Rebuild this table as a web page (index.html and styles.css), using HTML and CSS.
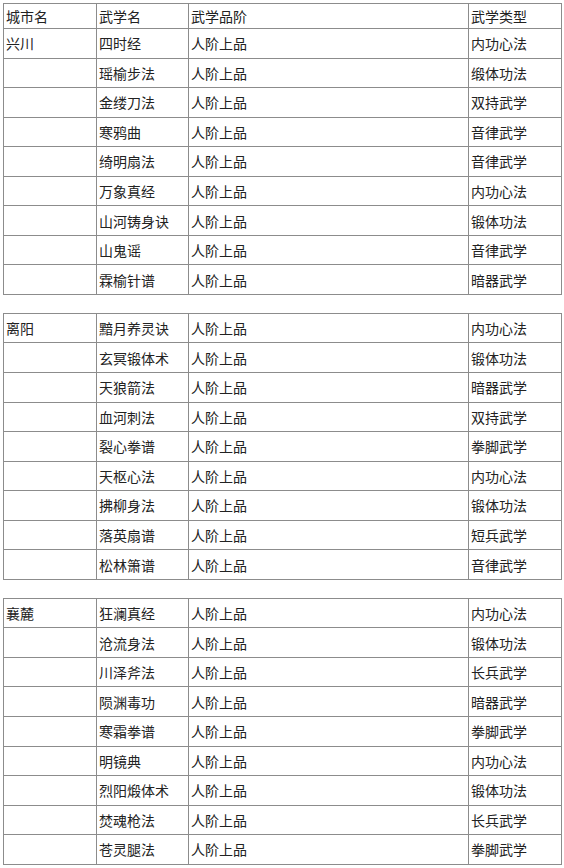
FILE: index.html
```html
<!DOCTYPE html>
<html lang="zh-CN">
<head>
<meta charset="utf-8">
<title>武学列表</title>
<link rel="stylesheet" href="styles.css">
</head>
<body>
<div class="page">
  <table class="wx">
    <colgroup><col class="c1"><col class="c2"><col class="c3"><col class="c4"></colgroup>
    <tr class="head"><td>城市名</td><td>武学名</td><td>武学品阶</td><td>武学类型</td></tr>
    <tr><td>兴川</td><td>四时经</td><td>人阶上品</td><td>内功心法</td></tr>
    <tr><td></td><td>瑶榆步法</td><td>人阶上品</td><td>缎体功法</td></tr>
    <tr><td></td><td>金缕刀法</td><td>人阶上品</td><td>双持武学</td></tr>
    <tr><td></td><td>寒鸦曲</td><td>人阶上品</td><td>音律武学</td></tr>
    <tr><td></td><td>绮明扇法</td><td>人阶上品</td><td>音律武学</td></tr>
    <tr><td></td><td>万象真经</td><td>人阶上品</td><td>内功心法</td></tr>
    <tr><td></td><td>山河铸身诀</td><td>人阶上品</td><td>锻体功法</td></tr>
    <tr><td></td><td>山鬼谣</td><td>人阶上品</td><td>音律武学</td></tr>
    <tr><td></td><td>霖榆针谱</td><td>人阶上品</td><td>暗器武学</td></tr>
  </table>
  <table class="wx">
    <colgroup><col class="c1"><col class="c2"><col class="c3"><col class="c4"></colgroup>
    <tr><td>离阳</td><td>黯月养灵诀</td><td>人阶上品</td><td>内功心法</td></tr>
    <tr><td></td><td>玄冥锻体术</td><td>人阶上品</td><td>锻体功法</td></tr>
    <tr><td></td><td>天狼箭法</td><td>人阶上品</td><td>暗器武学</td></tr>
    <tr><td></td><td>血河刺法</td><td>人阶上品</td><td>双持武学</td></tr>
    <tr><td></td><td>裂心拳谱</td><td>人阶上品</td><td>拳脚武学</td></tr>
    <tr><td></td><td>天枢心法</td><td>人阶上品</td><td>内功心法</td></tr>
    <tr><td></td><td>拂柳身法</td><td>人阶上品</td><td>锻体功法</td></tr>
    <tr><td></td><td>落英扇谱</td><td>人阶上品</td><td>短兵武学</td></tr>
    <tr><td></td><td>松林箫谱</td><td>人阶上品</td><td>音律武学</td></tr>
  </table>
  <table class="wx">
    <colgroup><col class="c1"><col class="c2"><col class="c3"><col class="c4"></colgroup>
    <tr><td>襄麓</td><td>狂澜真经</td><td>人阶上品</td><td>内功心法</td></tr>
    <tr><td></td><td>沧流身法</td><td>人阶上品</td><td>锻体功法</td></tr>
    <tr><td></td><td>川泽斧法</td><td>人阶上品</td><td>长兵武学</td></tr>
    <tr><td></td><td>陨渊毒功</td><td>人阶上品</td><td>暗器武学</td></tr>
    <tr><td></td><td>寒霜拳谱</td><td>人阶上品</td><td>拳脚武学</td></tr>
    <tr><td></td><td>明镜典</td><td>人阶上品</td><td>内功心法</td></tr>
    <tr><td></td><td>烈阳煅体术</td><td>人阶上品</td><td>锻体功法</td></tr>
    <tr><td></td><td>焚魂枪法</td><td>人阶上品</td><td>长兵武学</td></tr>
    <tr><td></td><td>苍灵腿法</td><td>人阶上品</td><td>拳脚武学</td></tr>
  </table>
</div>
</body>
</html>
```
FILE: styles.css
```css
html, body {
  margin: 0;
  padding: 0;
  background: #ffffff;
}
.page {
  padding: 3px 0 0 3px;
  font-family: "Noto Sans CJK SC", "Noto Sans", sans-serif;
  font-size: 14px;
  color: #222222;
}
.wx {
  border-collapse: collapse;
  table-layout: fixed;
  width: 558px;
  margin: 0 0 18px 0;
}
.c1 { width: 93px; }
.c2 { width: 92px; }
.c3 { width: 280px; }
.c4 { width: 93px; }
.wx td {
  border: 1px solid #8c8c8c;
  height: 29.55px;
  padding: 0 0 0 2px;
  line-height: 16px;
  vertical-align: middle;
  white-space: nowrap;
  box-sizing: border-box;
}
.wx tr.head td {
  height: 25px;
}
```
